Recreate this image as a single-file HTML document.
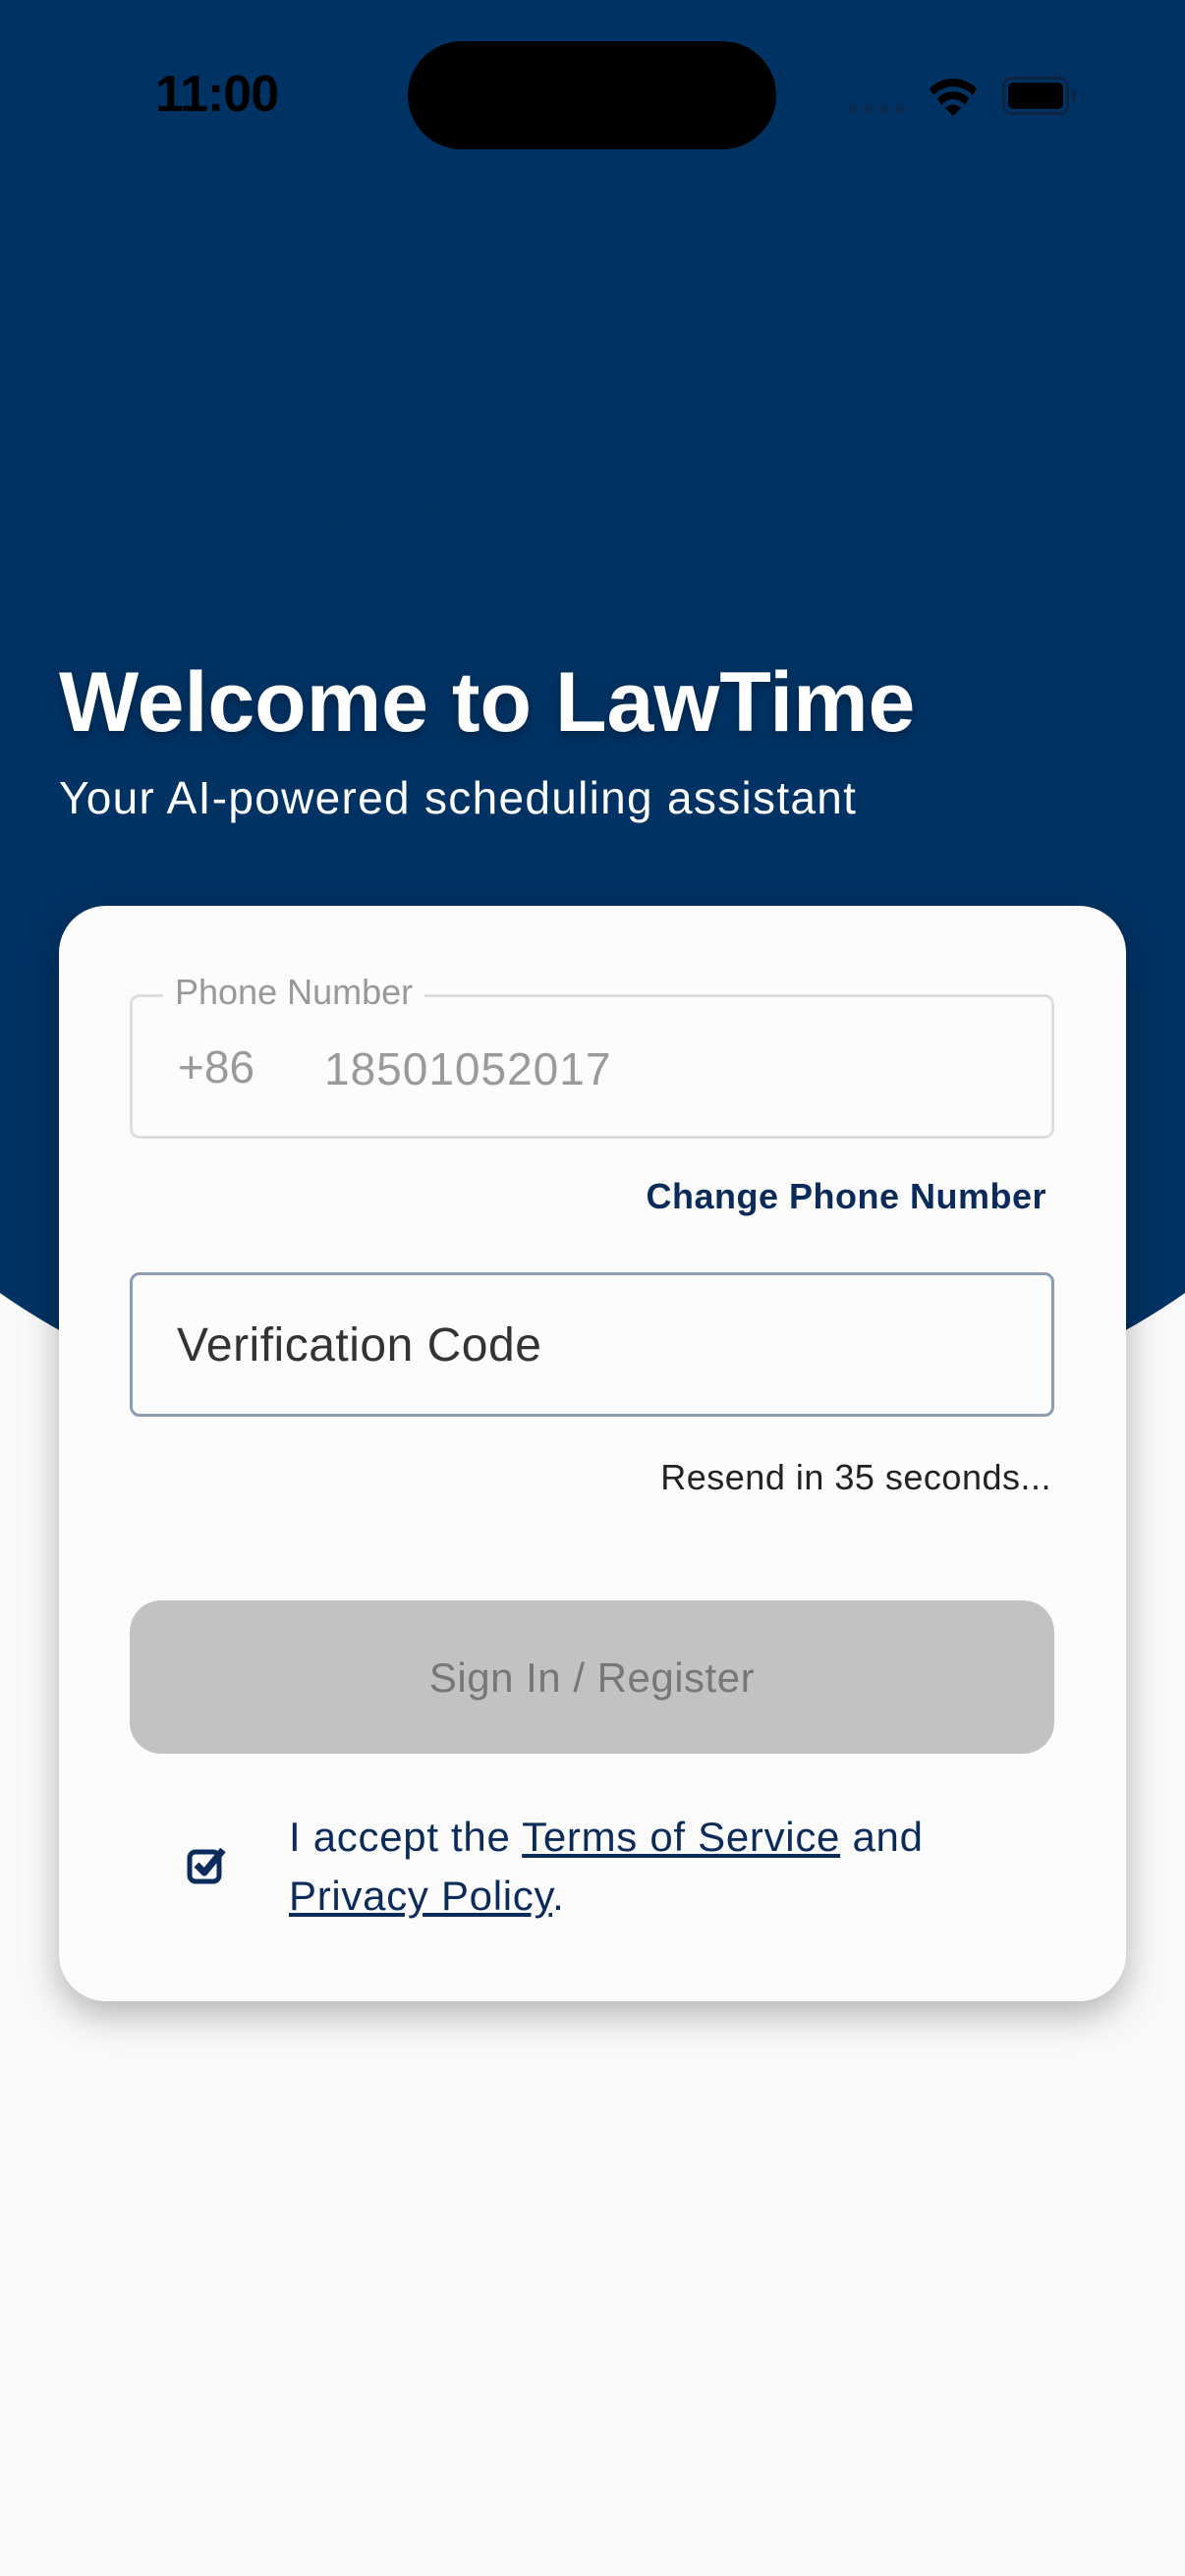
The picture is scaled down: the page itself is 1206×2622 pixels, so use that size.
<!DOCTYPE html>
<html><head><meta charset="utf-8">
<style>
html,body{margin:0;padding:0;}
body{width:1206px;height:2622px;position:relative;overflow:hidden;background:#f9f9f9;font-family:"Liberation Sans",sans-serif;}
.blue{position:absolute;left:0;top:0;width:1206px;height:1000px;background:#003263;}
.ell{position:absolute;left:-197px;top:504px;width:1600px;height:980px;border-radius:50%;background:#003263;}
.abs{position:absolute;white-space:nowrap;}
.card{position:absolute;left:60px;top:922px;width:1086px;height:1115px;background:#fcfcfc;border-radius:48px;box-shadow:0 14px 36px rgba(0,0,0,0.28);}
</style></head><body>
<div class="blue"></div>
<div class="ell"></div>

<div class="abs" style="left:158px;top:66px;font-size:52px;font-weight:bold;color:#000;letter-spacing:-1px;">11:00</div>
<div class="abs" style="left:415px;top:42px;width:375px;height:110px;border-radius:55px;background:#000;"></div>
<div class="abs" style="left:865px;top:106px;">
  <span style="position:absolute;left:0;width:8px;height:10px;border-radius:3px;background:#0a2a50;"></span>
  <span style="position:absolute;left:16px;width:8px;height:10px;border-radius:3px;background:#0a2a50;"></span>
  <span style="position:absolute;left:32px;width:8px;height:10px;border-radius:3px;background:#0a2a50;"></span>
  <span style="position:absolute;left:48px;width:8px;height:10px;border-radius:3px;background:#0a2a50;"></span>
</div>
<svg class="abs" style="left:944px;top:78px" width="52" height="40" viewBox="0 0 52 40">
  <path d="M2 12 A34 34 0 0 1 50 12 L46 19 A27 27 0 0 0 6 19Z" fill="#000"/>
  <path d="M10 22 A22 22 0 0 1 42 22 L38 29 A15 15 0 0 0 14 29Z" fill="#000"/>
  <path d="M18 32 A11 11 0 0 1 34 32 L26 40Z" fill="#000"/>
</svg>
<div class="abs" style="left:1020px;top:78px;width:68px;height:39px;border:3px solid #0f2440;border-radius:10px;box-sizing:border-box;"></div>
<div class="abs" style="left:1026px;top:84px;width:56px;height:27px;background:#000;border-radius:6px;"></div>
<div class="abs" style="left:1091px;top:91px;width:4px;height:12px;background:#0f2440;border-radius:0 3px 3px 0;"></div>

<div class="abs" style="left:60px;top:665px;font-size:86px;font-weight:bold;color:#fff;text-shadow:0 4px 10px rgba(0,0,0,0.3);line-height:100px;">Welcome to LawTime</div>
<div class="abs" style="left:60px;top:784px;font-size:46px;color:#fff;letter-spacing:1.3px;line-height:56px;">Your AI-powered scheduling assistant</div>

<div class="card"></div>
<div class="abs" style="left:132px;top:1012px;width:941px;height:147px;border:3px solid #dedede;border-radius:10px;box-sizing:border-box;"></div>
<div class="abs" style="left:166px;top:989px;background:#fcfcfc;padding:0 12px;font-size:36px;color:#999;line-height:42px;">Phone Number</div>
<div class="abs" style="left:181px;top:1058px;font-size:46px;color:#9a9a9a;line-height:56px;">+86</div>
<div class="abs" style="left:330px;top:1060px;font-size:46px;color:#9a9a9a;line-height:56px;letter-spacing:1px;">18501052017</div>
<div class="abs" style="right:141px;top:1196px;font-size:36px;font-weight:bold;color:#0b2c5a;line-height:44px;letter-spacing:0.5px;">Change Phone Number</div>

<div class="abs" style="left:132px;top:1295px;width:941px;height:147px;border:3px solid #8a9cad;border-radius:10px;box-sizing:border-box;"></div>
<div class="abs" style="left:180px;top:1340px;font-size:48px;color:#333;line-height:60px;letter-spacing:0.5px;">Verification Code</div>
<div class="abs" style="right:136px;top:1483px;font-size:36px;color:#222;line-height:42px;letter-spacing:0.5px;">Resend in 35 seconds...</div>

<div class="abs" style="left:132px;top:1629px;width:941px;height:156px;background:#c2c2c2;border-radius:32px;"></div>
<div class="abs" style="left:132px;top:1680px;width:941px;text-align:center;font-size:42px;color:#777;line-height:56px;letter-spacing:0.5px;">Sign In / Register</div>

<svg class="abs" style="left:189px;top:1876px" width="44" height="44" viewBox="0 0 44 44">
  <rect x="4" y="9" width="30" height="30" rx="6" fill="none" stroke="#0b2c5a" stroke-width="5"/>
  <path d="M11 22 L19 30 L38 7" fill="none" stroke="#0b2c5a" stroke-width="7" stroke-linejoin="round"/>
</svg>
<div class="abs" style="left:294px;top:1840px;font-size:42px;color:#0b2c5a;line-height:60px;letter-spacing:0.7px;">I accept the <span style="text-decoration:underline;">Terms of Service</span> and<br><span style="text-decoration:underline;">Privacy Policy</span>.</div>
</body></html>
